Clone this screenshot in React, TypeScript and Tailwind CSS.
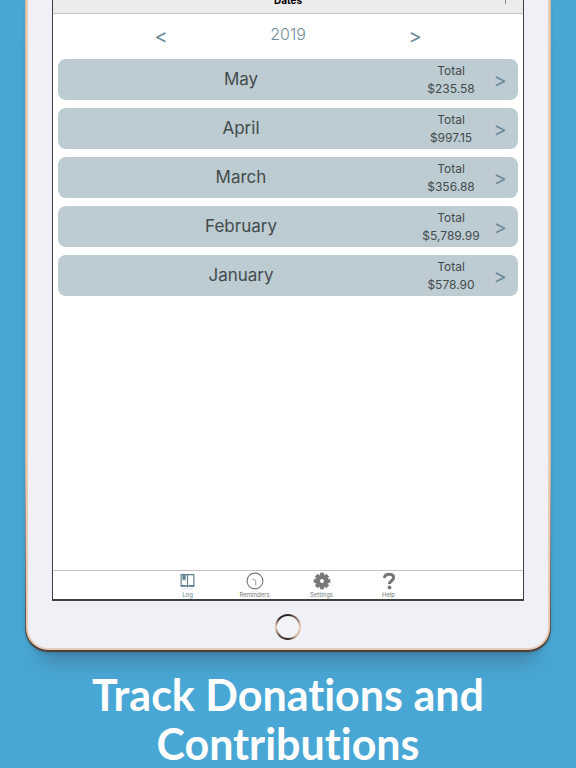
import type { ReactNode } from 'react';

interface MonthTotal {
  month: string;
  total: string;
}

const months: MonthTotal[] = [
  { month: 'May', total: '$235.58' },
  { month: 'April', total: '$997.15' },
  { month: 'March', total: '$356.88' },
  { month: 'February', total: '$5,789.99' },
  { month: 'January', total: '$578.90' },
];

function LogIcon() {
  return (
    <svg viewBox="0 0 16 16" className="h-[17px] w-[17px]" fill="none" stroke="currentColor">
      <path d="M2 1.6h5.3l.7.6.7-.6H14v10.5H9.2l-1.2.9-1.2-.9H2z" strokeWidth="1.1" />
      <path d="M8 2v10.5" strokeWidth="1.1" />
      <path d="M3.3 1.4h2.900v6L4.750 6.100 3.300 7.400z" fill="currentColor" stroke="none" />
      <path d="M1.6 12.1h4.900M9.500 12.100h4.900" strokeWidth="1.5" />
      <path d="M2.6 15h10.8" strokeWidth="0.6" opacity="0.35" />
    </svg>
  );
}

function ClockIcon() {
  return (
    <svg viewBox="0 0 18 18" className="h-[18px] w-[18px]" fill="none" stroke="currentColor">
      <circle cx="9" cy="9" r="7.9" strokeWidth="1.1" />
      <path d="M6.4 7l2.7 1.2c.5.3.6.6.6 1.1l.1 4.2" strokeWidth="0.8" />
    </svg>
  );
}

function GearIcon() {
  return (
    <svg viewBox="-9 -9 18 18" className="h-[18px] w-[18px]" fill="none" stroke="currentColor">
      <circle r="4.1" strokeWidth="4.2" />
      {[0, 45, 90, 135, 180, 225, 270, 315].map((angle) => (
        <path
          key={angle}
          d="M-1.900-5l.3-2.900h3.200l.3 2.900z"
          transform={`rotate(${angle})`}
          fill="currentColor"
          strokeWidth="0.8"
          strokeLinejoin="round"
        />
      ))}
    </svg>
  );
}

function HelpIcon() {
  return (
    <svg viewBox="0 0 18 18" className="h-[18px] w-[18px]" fill="none" stroke="currentColor">
      <path d="M4.5 6C4.600 3.500 6.400 2.300 9.100 2.300c2.800 0 4.500 1.300 4.500 3.400 0 3-4.100 3.100-4.100 6.300" strokeWidth="3" />
      <circle cx="9.5" cy="15.4" r="1.9" fill="currentColor" stroke="none" />
    </svg>
  );
}

function MonthRow({ month, total }: MonthTotal) {
  return (
    <li>
      <button className="flex h-[41px] w-full items-center rounded-lg bg-[#bdccd2] pl-[13px] pr-[9px] text-[#444a4d]">
        <span className="flex-1 text-[17px]">{month}</span>
        <span className="w-20 text-xs leading-[18px]">
          <span className="block">Total</span>
          <span className="block">{total}</span>
        </span>
        <span className="w-[18px] text-xl text-[#6c8a98]">&gt;</span>
      </button>
    </li>
  );
}

function Tab({ label, active, children }: { label: string; active?: boolean; children: ReactNode }) {
  return (
    <button
      className={`flex w-[67px] flex-col items-center text-[6px] leading-[8px] ${
        active ? 'text-[#5f7f8e]' : 'text-[#777777]'
      }`}
    >
      <span className="flex h-5 items-center">{children}</span>
      {label}
    </button>
  );
}

export default function App() {
  return (
    <main className="flex min-h-screen flex-col overflow-hidden bg-[#49a7d5] font-['Inter',sans-serif]">
      <div className="mx-[25px] flex flex-1 flex-col rounded-b-[23px] bg-gradient-to-b from-[#d9b9a4] from-70% to-[#4a3d38] px-px pb-[2px] shadow-[0_26px_20px_-16px_rgba(60,100,130,0.5),0_2px_4px_-2px_rgba(30,50,65,0.5)]">
        <div className="flex flex-1 flex-col rounded-b-[22px] bg-[#e6cbb9] px-[2px] pb-[2px]">
          <div className="flex flex-1 flex-col rounded-b-[20px] bg-[#f0f1f6] px-6">
            <div className="flex flex-1 flex-col border-x border-b-2 border-[#3e4044] bg-white">
              <header className="relative flex h-3.5 items-end justify-center overflow-hidden border-b border-[#c4c4c4] bg-[#ececec]">
                <h1 className="pb-1.5 text-[10px] font-bold leading-[14px] text-black">Dates</h1>
                <button aria-label="Add" className="absolute right-[17px] top-0 h-1 w-px bg-[#7f8f98]" />
              </header>

              <nav className="flex h-[45px] items-center justify-between px-[98px] pb-1.5 text-[#6c8a98]">
                <button aria-label="Previous year" className="w-5 pt-1 text-xl">&lt;</button>
                <h2 className="text-base font-light text-[#708d9c]">2019</h2>
                <button aria-label="Next year" className="w-5 pt-1 text-xl">&gt;</button>
              </nav>

              <ul className="flex flex-1 flex-col gap-2 px-[5px]">
                {months.map((item) => (
                  <MonthRow key={item.month} {...item} />
                ))}
              </ul>

              <nav className="flex justify-center border-t border-[#c4c4c4]">
                <Tab label="Log" active>
                  <LogIcon />
                </Tab>
                <Tab label="Reminders">
                  <ClockIcon />
                </Tab>
                <Tab label="Settings">
                  <GearIcon />
                </Tab>
                <Tab label="Help">
                  <HelpIcon />
                </Tab>
              </nav>
            </div>

            <div className="flex h-[47px] items-center justify-center pt-1">
              <button
                aria-label="Home"
                className="h-[26px] w-[26px] rounded-full bg-[conic-gradient(#2a2220,#e9c7af_25%,#d9b79f_38%,#2a2220_50%,#5d4b43_62%,#f3d3bc_75%,#2a2220_88%)] p-[2px]"
              >
                <span className="block h-full w-full rounded-full bg-[#f2f3f7]" />
              </button>
            </div>
          </div>
        </div>
      </div>

      <p className="px-16 pt-[18px] text-center font-['Lato',sans-serif] text-[43px] font-bold leading-[49px] text-white [font-variant-ligatures:none]">
        Track Donations and Contributions
      </p>
    </main>
  );
}
